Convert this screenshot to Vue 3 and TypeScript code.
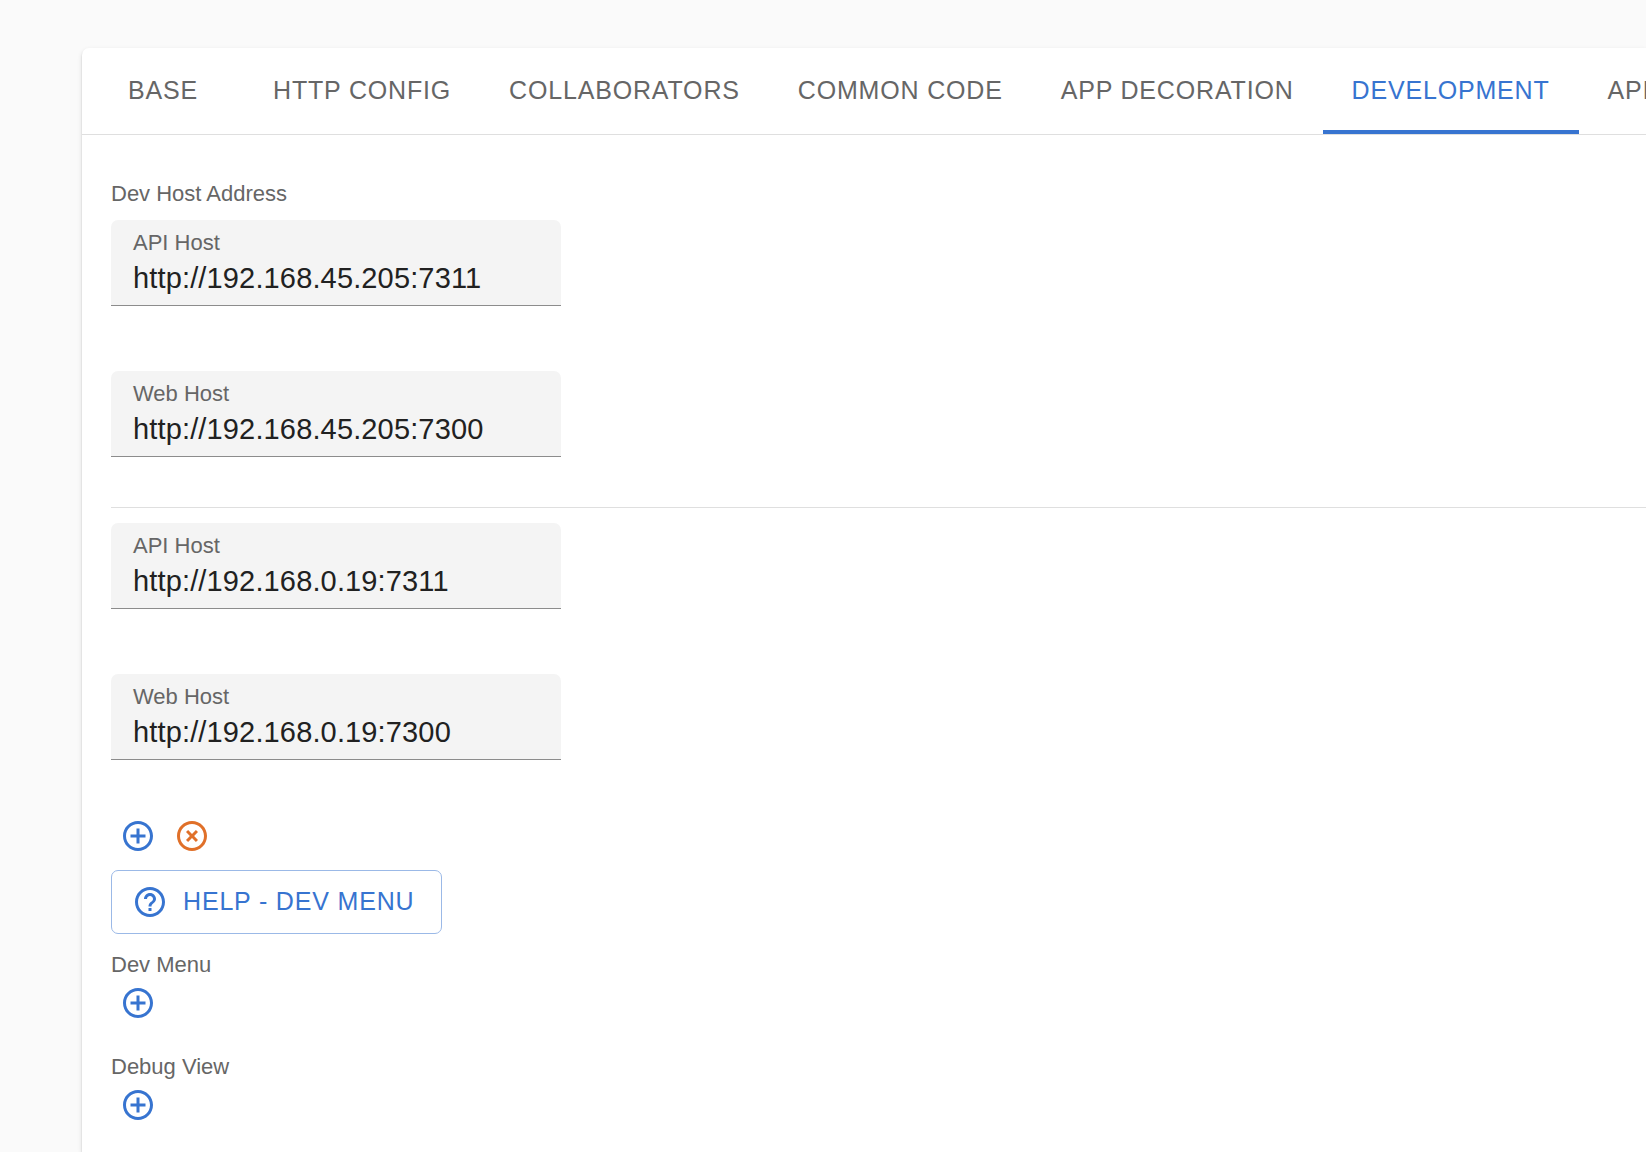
<script setup lang="ts">
import { reactive, ref } from 'vue'

interface HostPair {
  api: string
  web: string
}

const tabs: string[] = [
  'Base',
  'HTTP Config',
  'Collaborators',
  'Common Code',
  'App Decoration',
  'Development',
  'API',
]
const activeTab = ref('Development')

const hosts = reactive<HostPair[]>([
  { api: 'http://192.168.45.205:7311', web: 'http://192.168.45.205:7300' },
  { api: 'http://192.168.0.19:7311', web: 'http://192.168.0.19:7300' },
])

const icons = {
  add: 'M13 7h-2v4H7v2h4v4h2v-4h4v-2h-4V7zm-1-5C6.48 2 2 6.48 2 12s4.48 10 10 10 10-4.48 10-10S17.52 2 12 2zm0 18c-4.41 0-8-3.59-8-8s3.59-8 8-8 8 3.59 8 8-3.59 8-8 8z',
  remove:
    'M14.59 8L12 10.59 9.41 8 8 9.41 10.59 12 8 14.59 9.41 16 12 13.41 14.59 16 16 14.59 13.41 12 16 9.41 14.59 8zM12 2C6.47 2 2 6.47 2 12s4.47 10 10 10 10-4.47 10-10S17.53 2 12 2zm0 18c-4.41 0-8-3.59-8-8s3.59-8 8-8 8 3.59 8 8-3.59 8-8 8z',
  help: 'M11 18h2v-2h-2v2zm1-16C6.48 2 2 6.48 2 12s4.48 10 10 10 10-4.48 10-10S17.52 2 12 2zm0 18c-4.41 0-8-3.59-8-8s3.59-8 8-8 8 3.59 8 8-3.59 8-8 8zm0-14c-2.21 0-4 1.79-4 4h2c0-1.1.9-2 2-2s2 .9 2 2c0 2-3 1.75-3 5h2c0-2.25 3-2.5 3-5 0-2.21-1.79-4-4-4z',
}

const sections: string[] = ['Dev Menu', 'Debug View']

function addHost() {
  hosts.push({ api: '', web: '' })
}

function removeHost() {
  hosts.pop()
}
</script>

<template>
  <main class="page">
    <section class="paper">
      <div class="tabs" role="tablist">
        <button
          v-for="tab in tabs"
          :key="tab"
          type="button"
          role="tab"
          class="tab"
          :class="{ active: tab === activeTab }"
          :aria-selected="tab === activeTab"
          @click="activeTab = tab"
        >
          {{ tab }}
        </button>
      </div>

      <div class="content">
        <h2 class="caption host-caption">Dev Host Address</h2>
        <div v-for="(host, i) in hosts" :key="i" class="host">
          <div class="field">
            <label :for="`api-${i}`">API Host</label>
            <input :id="`api-${i}`" v-model="host.api" type="text" />
          </div>
          <div class="field">
            <label :for="`web-${i}`">Web Host</label>
            <input :id="`web-${i}`" v-model="host.web" type="text" />
          </div>
        </div>

        <div class="actions">
          <button type="button" class="icon-button" aria-label="Add host" @click="addHost">
            <svg viewBox="0 0 24 24"><path :d="icons.add" /></svg>
          </button>
          <button type="button" class="icon-button warning" aria-label="Remove host" @click="removeHost">
            <svg viewBox="0 0 24 24"><path :d="icons.remove" /></svg>
          </button>
        </div>

        <button type="button" class="help-button">
          <svg viewBox="0 0 24 24"><path :d="icons.help" /></svg>
          <span>Help - Dev Menu</span>
        </button>

        <div v-for="section in sections" :key="section" class="section">
          <h2 class="caption">{{ section }}</h2>
          <button type="button" class="icon-button" :aria-label="`Add ${section}`">
            <svg viewBox="0 0 24 24"><path :d="icons.add" /></svg>
          </button>
        </div>
      </div>
    </section>
  </main>
</template>

<style>
body {
  background: #fafafa;
}
</style>

<style scoped>
.page {
  box-sizing: border-box;
  min-height: 100vh;
  padding: 48px 0 0 82px;
  overflow: hidden;
  display: flex;
  flex-direction: column;
  background: #fafafa;
  color: #666;
  font-family: 'Liberation Sans', Arial, Helvetica, sans-serif;
}

.paper {
  flex: 1;
  min-width: 0;
  background: #fff;
  border-radius: 7px 0 0 0;
  box-shadow:
    0 4px 2px -2px rgba(0, 0, 0, 0.2),
    0 2px 2px rgba(0, 0, 0, 0.14),
    0 2px 5px rgba(0, 0, 0, 0.12);
}

.tabs {
  display: flex;
  overflow: hidden;
  border-bottom: 1px solid #dfdfdf;
}

button {
  font-family: inherit;
  cursor: pointer;
}

.tab {
  flex: none;
  box-sizing: border-box;
  min-width: 162px;
  height: 86px;
  padding: 2px 29px 0;
  border: 0;
  border-bottom: 4px solid transparent;
  background: none;
  color: #666;
  font-size: 25px;
  line-height: 32px;
  letter-spacing: 0.033em;
  text-transform: uppercase;
  white-space: nowrap;
}

.tab:last-child {
  min-width: 0;
}

.tab.active {
  color: #3774d0;
  border-bottom-color: #3774d0;
}

.content {
  padding: 47px 0 19px 29px;
}

.caption {
  margin: 0;
  font-size: 22px;
  font-weight: 400;
  line-height: 23px;
}

.host-caption {
  margin-bottom: 15px;
}

.host {
  display: flex;
  flex-direction: column;
  gap: 65px;
}

.host + .host {
  margin-top: 50px;
  padding-top: 15px;
  border-top: 1px solid #dfdfdf;
}

.field {
  box-sizing: border-box;
  width: 450px;
  max-width: 100%;
  padding: 11px 22px 9px;
  display: flex;
  flex-direction: column;
  gap: 5px;
  background: #f4f4f4;
  border-bottom: 1px solid #8c8c8c;
  border-radius: 7px 7px 0 0;
}

.field label {
  font-size: 22px;
  line-height: 24px;
}

.field input {
  width: 100%;
  height: 36px;
  padding: 0;
  border: 0;
  outline: 0;
  background: none;
  color: #212121;
  font-family: inherit;
  font-size: 29px;
  letter-spacing: 0.005em;
}

.actions {
  display: flex;
  margin-top: 49px;
}

.icon-button {
  display: block;
  width: 54px;
  height: 54px;
  padding: 9px;
  border: 0;
  border-radius: 50%;
  background: none;
  color: #3774d0;
}

.icon-button.warning {
  color: #e07029;
}

svg {
  display: block;
  width: 36px;
  height: 36px;
  fill: currentColor;
}

.help-button {
  display: flex;
  align-items: center;
  gap: 15px;
  height: 64px;
  margin: 7px 0 19px;
  padding: 0 27px 0 20px;
  border: 1px solid #9bb9e7;
  border-radius: 7px;
  background: none;
  color: #3774d0;
  font-size: 25px;
  letter-spacing: 0.033em;
  text-transform: uppercase;
}

.help-button span {
  padding-bottom: 2px;
}

.section + .section {
  margin-top: 25px;
}
</style>
